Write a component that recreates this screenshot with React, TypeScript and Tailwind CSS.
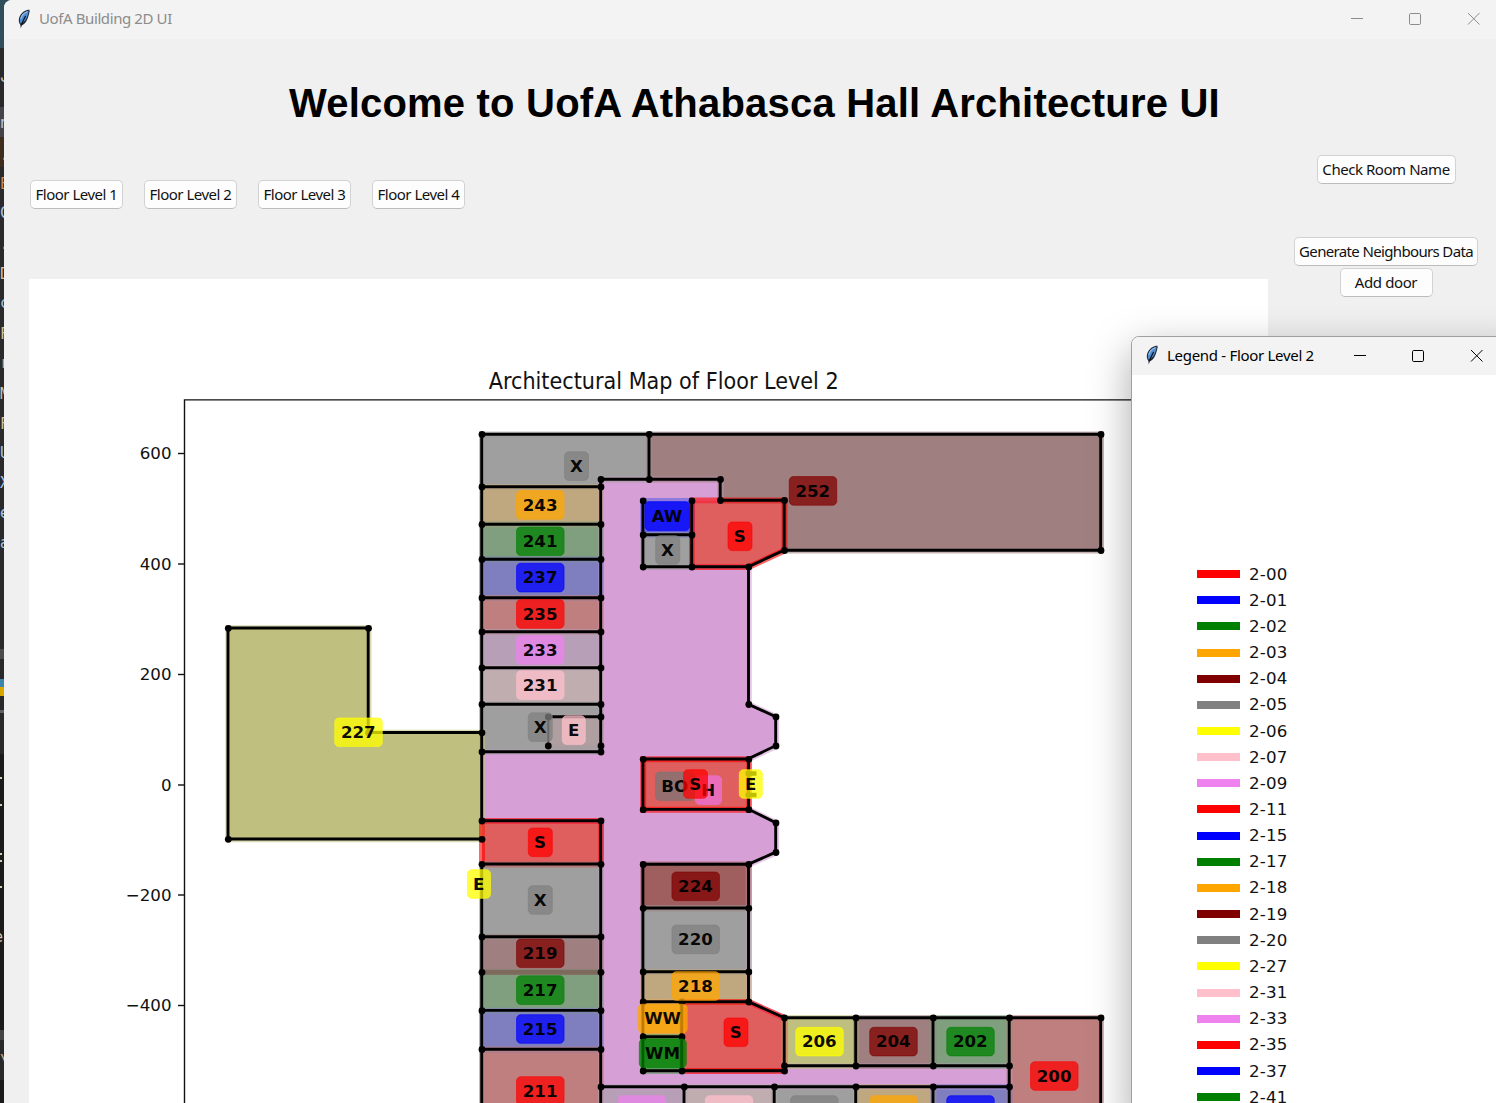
import React from "react";

const RED = "#ff0000";
const BLUE = "#0000ff";
const GREEN = "#008000";
const ORANGE = "#ffa500";
const MAROON = "#800000";
const GRAY = "#808080";
const YELLOW = "#ffff00";
const PINK = "#ffc0cb";
const VIOLET = "#ee82ee";

type Point = [number, number];
type Room = { fill: string; edge: string; points: Point[] };

const box = (x1: number, y1: number, x2: number, y2: number): Point[] => [
  [x1, y1],
  [x2, y1],
  [x2, y2],
  [x1, y2],
];

const rooms: Room[] = [
  {
    fill: "#d6a0d6",
    edge: VIOLET,
    points: [
      [601, 479.5], [720.5, 479.5], [720.5, 500.5], [692, 500.5], [692, 567], [748.8, 567],
      [748.8, 704.5], [776, 717], [776, 746], [748.8, 759], [748.8, 809.5], [776, 823],
      [776, 852.5], [748.8, 864.5], [748.8, 1002], [784.5, 1018], [784.5, 1066], [1009.5, 1066],
      [1009.5, 1087], [601, 1087], [601, 821], [482, 821], [482, 752], [601, 752],
    ],
  },
  {
    fill: "#9f9f9f",
    edge: GRAY,
    points: [[482, 434.5], [649.3, 434.5], [649.3, 479.5], [601, 479.5], [601, 487], [482, 487]],
  },
  {
    fill: "#9f7f7f",
    edge: MAROON,
    points: [
      [649.3, 434.5], [1101, 434.5], [1101, 550.5], [784.5, 550.5], [784.5, 500.5],
      [720.5, 500.5], [720.5, 479.5], [649.3, 479.5],
    ],
  },
  { fill: "#bfa77f", edge: ORANGE, points: box(482, 487, 601, 524.5) },
  { fill: "#7f9f7f", edge: GREEN, points: box(482, 524.5, 601, 559.5) },
  { fill: "#7f7fbf", edge: BLUE, points: box(482, 559.5, 601, 598) },
  { fill: "#bf7f7f", edge: RED, points: box(482, 598, 601, 632) },
  { fill: "#b89fb8", edge: VIOLET, points: box(482, 632, 601, 668) },
  { fill: "#bfadb0", edge: PINK, points: box(482, 668, 601, 704.5) },
  { fill: "#9f9f9f", edge: GRAY, points: box(482, 704.5, 601, 751.5) },
  { fill: "#af9fa1", edge: "#a89a9c", points: box(548.3, 717, 601, 746) },
  {
    fill: "#bfbf7f",
    edge: YELLOW,
    points: [[228.3, 628.3], [368.5, 628.3], [368.5, 732.8], [482, 732.8], [482, 839.3], [228.3, 839.3]],
  },
  { fill: "#df5f5f", edge: RED, points: box(482, 821, 601, 864.3) },
  { fill: "#9f9f9f", edge: GRAY, points: box(482, 864.3, 601, 937) },
  { fill: "#9f7f7f", edge: MAROON, points: box(482, 937, 601, 972.3) },
  { fill: "#7f9f7f", edge: GREEN, points: box(482, 972.3, 601, 1010.7) },
  { fill: "#7f7fbf", edge: BLUE, points: box(482, 1010.7, 601, 1049.5) },
  { fill: "#bf7f7f", edge: RED, points: box(482, 1049.5, 601, 1160) },
  { fill: "#5f5fdf", edge: BLUE, points: box(643.2, 501, 692, 535) },
  { fill: "#9f9f9f", edge: GRAY, points: box(643.2, 535, 692, 567) },
  {
    fill: "#df5f5f",
    edge: RED,
    points: [[692, 500.5], [784.5, 500.5], [784.5, 550.5], [748.8, 567], [692, 567]],
  },
  { fill: "#df5f5f", edge: RED, points: box(643.2, 759.3, 748.8, 809.7) },
  { fill: "#9f5f5f", edge: MAROON, points: box(643.2, 864.5, 748.8, 908.3) },
  { fill: "#9f9f9f", edge: GRAY, points: box(643.2, 908.3, 748.8, 972) },
  { fill: "#bfa77f", edge: ORANGE, points: box(643.2, 972, 748.8, 1002) },
  {
    fill: "#df5f5f",
    edge: RED,
    points: [[682, 1002], [748.8, 1002], [784.5, 1018], [784.5, 1071], [682, 1071]],
  },
  { fill: "#dfa75f", edge: ORANGE, points: box(643.2, 1002, 682, 1037) },
  { fill: "#5f9f5f", edge: GREEN, points: box(643.2, 1037, 682, 1071) },
  { fill: "#bfbf7f", edge: YELLOW, points: box(784.5, 1018, 856, 1066) },
  { fill: "#9f7f7f", edge: MAROON, points: box(856, 1018, 933.3, 1066) },
  { fill: "#7f9f7f", edge: GREEN, points: box(933.3, 1018, 1009.5, 1066) },
  { fill: "#bf7f7f", edge: RED, points: box(1009.5, 1018, 1101, 1160) },
  { fill: "#b89fb8", edge: VIOLET, points: box(601, 1087, 684.3, 1160) },
  { fill: "#bfadb0", edge: PINK, points: box(684.3, 1087, 774.5, 1160) },
  { fill: "#9f9f9f", edge: GRAY, points: box(774.5, 1087, 856, 1160) },
  { fill: "#bfa77f", edge: ORANGE, points: box(856, 1087, 933.3, 1160) },
  { fill: "#7f7fbf", edge: BLUE, points: box(933.3, 1087, 1009.5, 1160) },
];

const walls: Point[][] = [
  [[482, 821], [482, 434.5], [1101, 434.5], [1101, 550.5], [784.5, 550.5], [748.8, 567], [748.8, 704.5], [776, 717], [776, 746], [748.8, 759], [748.8, 809.5], [776, 823], [776, 852.5], [748.8, 864.5], [748.8, 1002], [784.5, 1018], [1101, 1018], [1101, 1160]],
  [[649.3, 434.5], [649.3, 479.5]],
  [[601, 752], [601, 479.5], [720.5, 479.5], [720.5, 500.5], [784.5, 500.5], [784.5, 550.5]],
  [[482, 487], [601, 487]],
  [[482, 524.5], [601, 524.5]],
  [[482, 559.5], [601, 559.5]],
  [[482, 598], [601, 598]],
  [[482, 632], [601, 632]],
  [[482, 668], [601, 668]],
  [[482, 704.5], [601, 704.5]],
  [[548.3, 717], [601, 717]],
  [[482, 752], [601, 752]],
  [[482, 732.8], [368.5, 732.8], [368.5, 628.3], [228.3, 628.3], [228.3, 839.3], [482, 839.3]],
  [[482, 821], [601, 821], [601, 1160]],
  [[482, 864.3], [601, 864.3]],
  [[482, 864.3], [482, 1160]],
  [[482, 937], [601, 937]],
  [[482, 1010.7], [601, 1010.7]],
  [[482, 1049.5], [601, 1049.5]],
  [[643.2, 501], [643.2, 567], [748.8, 567]],
  [[643.2, 535], [692, 535]],
  [[692, 500.5], [692, 567]],
  [[643.2, 759.3], [748.8, 759.3], [748.8, 809.7], [643.2, 809.7], [643.2, 759.3]],
  [[748.8, 864.5], [643.2, 864.5], [643.2, 1071], [784.5, 1071], [784.5, 1018]],
  [[643.2, 908.3], [748.8, 908.3]],
  [[643.2, 972], [748.8, 972]],
  [[643.2, 1002], [748.8, 1002]],
  [[643.2, 1037], [682, 1037]],
  [[682, 1002], [682, 1071]],
  [[784.5, 1066], [1009.5, 1066]],
  [[856, 1018], [856, 1066]],
  [[933.3, 1018], [933.3, 1066]],
  [[1009.5, 1018], [1009.5, 1160]],
  [[601, 1087], [1009.5, 1087]],
  [[684.3, 1087], [684.3, 1160]],
  [[774.5, 1087], [774.5, 1160]],
  [[856, 1087], [856, 1160]],
  [[933.3, 1087], [933.3, 1160]],
];

const dots: Point[] = [
  [482, 434.5], [649.3, 434.5], [1101, 434.5], [1101, 550.5], [784.5, 550.5], [784.5, 500.5],
  [720.5, 500.5], [720.5, 479.5], [649.3, 479.5], [601, 479.5], [748.8, 567], [748.8, 704.5],
  [776, 717], [776, 746], [748.8, 759.3], [748.8, 809.7], [776, 823], [776, 852.5],
  [748.8, 864.5], [748.8, 908.3], [748.8, 972], [748.8, 1002], [784.5, 1018], [784.5, 1066],
  [784.5, 1071], [856, 1018], [933.3, 1018], [1009.5, 1018], [1101, 1018], [856, 1066],
  [933.3, 1066], [1009.5, 1066], [601, 1087], [684.3, 1087], [774.5, 1087], [856, 1087],
  [933.3, 1087], [1009.5, 1087], [548.3, 717], [548.3, 746], [601, 717], [601, 746],
  [482, 732.8], [368.5, 628.3], [228.3, 628.3], [228.3, 839.3], [482, 839.3], [368.5, 732.8],
  [643.2, 501], [692, 501], [643.2, 535], [692, 535], [643.2, 567], [692, 567],
  [643.2, 759.3], [643.2, 809.7], [643.2, 864.5], [643.2, 908.3], [643.2, 972], [643.2, 1002],
  [643.2, 1037], [643.2, 1071], [682, 1002], [682, 1037], [682, 1071],
  ...[487, 524.5, 559.5, 598, 632, 668, 704.5, 752, 821, 864.3, 937, 972.3, 1010.7, 1049.5].flatMap(
    (y): Point[] => [[482, y], [601, y]],
  ),
];

type Label = { text: string; x: number; y: number; color: string; w?: number };

const labels: Label[] = [
  { text: "X", x: 576.5, y: 466.5, color: GRAY, w: 24 },
  { text: "252", x: 813, y: 491.3, color: MAROON },
  { text: "243", x: 540.3, y: 505.3, color: ORANGE },
  { text: "241", x: 540.3, y: 541.7, color: GREEN },
  { text: "237", x: 540.3, y: 578, color: BLUE },
  { text: "235", x: 540.3, y: 614.3, color: RED },
  { text: "233", x: 540.3, y: 650.3, color: VIOLET },
  { text: "231", x: 540.3, y: 685.5, color: PINK },
  { text: "X", x: 540.3, y: 727.5, color: GRAY, w: 24 },
  { text: "E", x: 573.8, y: 730.5, color: PINK, w: 23 },
  { text: "227", x: 358.5, y: 732.7, color: YELLOW },
  { text: "S", x: 540.3, y: 842.7, color: RED, w: 24 },
  { text: "E", x: 479, y: 884.4, color: YELLOW, w: 23 },
  { text: "X", x: 540.3, y: 900.4, color: GRAY, w: 24 },
  { text: "219", x: 540.3, y: 953.7, color: MAROON },
  { text: "217", x: 540.3, y: 990.5, color: GREEN },
  { text: "215", x: 540.3, y: 1029.4, color: BLUE },
  { text: "211", x: 540.3, y: 1091.4, color: RED },
  { text: "AW", x: 667.3, y: 516.5, color: BLUE, w: 44.5 },
  { text: "X", x: 667.7, y: 550.4, color: GRAY, w: 24 },
  { text: "S", x: 740, y: 536.7, color: RED, w: 24 },
  { text: "BO", x: 675, y: 786.7, color: "#7c7474", w: 39 },
  { text: "H", x: 708.5, y: 790.5, color: "#ee72d8", w: 26 },
  { text: "S", x: 695.5, y: 784.4, color: RED, w: 24 },
  { text: "E", x: 750.8, y: 784.4, color: YELLOW, w: 23 },
  { text: "224", x: 695.7, y: 886.7, color: MAROON },
  { text: "220", x: 695.7, y: 939.8, color: GRAY },
  { text: "218", x: 695.7, y: 986.4, color: ORANGE },
  { text: "S", x: 736, y: 1032.7, color: RED, w: 24 },
  { text: "WW", x: 662.7, y: 1018.9, color: ORANGE, w: 49 },
  { text: "WM", x: 662.8, y: 1053.7, color: GREEN, w: 47 },
  { text: "206", x: 819.5, y: 1042, color: YELLOW },
  { text: "204", x: 893.5, y: 1042, color: MAROON },
  { text: "202", x: 970.5, y: 1042, color: GREEN },
  { text: "200", x: 1054.3, y: 1076.4, color: RED },
  { text: "209", x: 642, y: 1110.4, color: VIOLET },
  { text: "207", x: 729, y: 1110.4, color: PINK },
  { text: "205", x: 814.3, y: 1110.4, color: GRAY },
  { text: "203", x: 893.5, y: 1110.4, color: ORANGE },
  { text: "201", x: 970.5, y: 1110.4, color: BLUE },
];

const ticks: [string, number][] = [
  ["600", 453.5],
  ["400", 564],
  ["200", 674.5],
  ["0", 785],
  ["−200", 895],
  ["−400", 1005.5],
];

const legend: [string, string][] = [
  ["2-00", RED],
  ["2-01", BLUE],
  ["2-02", GREEN],
  ["2-03", ORANGE],
  ["2-04", MAROON],
  ["2-05", GRAY],
  ["2-06", YELLOW],
  ["2-07", PINK],
  ["2-09", VIOLET],
  ["2-11", RED],
  ["2-15", BLUE],
  ["2-17", GREEN],
  ["2-18", ORANGE],
  ["2-19", MAROON],
  ["2-20", GRAY],
  ["2-27", YELLOW],
  ["2-31", PINK],
  ["2-33", VIOLET],
  ["2-35", RED],
  ["2-37", BLUE],
  ["2-41", GREEN],
];

const join = (points: Point[]) => points.map((p) => p.join(",")).join(" ");

function FloorMap() {
  return (
    <svg
      viewBox="29 279 1239 824"
      className="block h-[824px] w-[1239px] bg-white font-['DejaVu_Sans']"
    >
      <text
        transform="translate(663.7 389) scale(1 1.13)"
        fontSize="20"
        textAnchor="middle"
        textLength="350"
        lengthAdjust="spacingAndGlyphs"
        fill="#111"
      >
        Architectural Map of Floor Level 2
      </text>
      <path d="M184.5 1103V399.9H1268" fill="none" stroke="#111" strokeWidth="1.4" />
      {ticks.map(([text, y]) => (
        <g key={text}>
          <path d={`M178 ${y}H184.5`} stroke="#111" strokeWidth="1.4" />
          <text x="171.5" y={y + 5.8} fontSize="16.67" textAnchor="end" fill="#111">
            {text}
          </text>
        </g>
      ))}
      {rooms.map((r, i) => (
        <polygon key={i} points={join(r.points)} fill={r.fill} />
      ))}
      {rooms.map((r, i) => (
        <polygon
          key={i}
          points={join(r.points)}
          fill="none"
          stroke={r.fill === "#df5f5f" ? r.edge : r.fill}
          strokeWidth="6"
          strokeOpacity="0.6"
        />
      ))}
      <path d="M482 972.3H601" stroke="#7d6a5c" strokeWidth="5" />
      {walls.map((w, i) => (
        <polyline
          key={i}
          points={join(w)}
          transform="translate(-0.3 -0.3)"
          fill="none"
          stroke="#000"
          strokeWidth="2.9"
        />
      ))}
      {dots.map(([x, y], i) => (
        <circle key={i} cx={x} cy={y} r="3.4" />
      ))}
      <path d="M548.3 720V743" stroke="#2c2828" strokeWidth="2" />
      <path d="M745.5 773.5H756.5M745.5 795H756.5" stroke="#000" strokeWidth="4.5" />
      {labels.map((l, i) => {
        const w = l.w ?? 47.5;
        return (
          <g key={i}>
            <rect
              x={l.x - w / 2}
              y={l.y - 14.7}
              width={w}
              height="28.6"
              rx="4.2"
              fill={l.color}
              fillOpacity="0.75"
              stroke={l.color}
              strokeOpacity="0.6"
            />
            <text
              x={l.x - 0.2}
              y={l.y + 5.4}
              fontSize="16.67"
              fontWeight="700"
              textAnchor="middle"
              fill="#000"
              fillOpacity="0.95"
            >
              {l.text}
            </text>
          </g>
        );
      })}
    </svg>
  );
}

function Feather() {
  return (
    <svg viewBox="0 0 14 20" className="block h-5 w-3.5 shrink-0">
      <path
        d="M12.4 .8C8.6 .8 4.6 3.3 2.6 7.6C1.3 10.6 1.5 13.6 3.4 16L3.8 19.4L4.8 16.2C8 15.3 10.6 11 11.5 6.8C12.2 4.4 13 2.2 12.4 .8Z"
        fill="#1d2733"
      />
      <path
        d="M11.6 1.8C8 2.4 4.6 5 3.5 8.4C2.5 11 2.7 13 3.7 14.6C7 13.8 9.6 10.4 10.5 6.6C11 4.8 11.8 3 11.6 1.8Z"
        fill="#4f8cd2"
      />
      <path d="M10.4 2.8C7 4 4.6 6.6 3.6 10" stroke="#9fc0e6" strokeWidth="1.1" fill="none" />
      <path d="M8.6 7C7.4 9.4 5.6 12.4 4.2 16.4" stroke="#0a121c" strokeWidth="1.2" fill="none" />
    </svg>
  );
}

function Controls({ className }: { className: string }) {
  return (
    <svg viewBox="0 0 130 14" fill="none" className={className}>
      <path d="M1 6.5H13" stroke="currentColor" />
      <rect x="59.5" y="1.5" width="11" height="11" rx="1.2" stroke="currentColor" />
      <path d="M118 1L129.5 12.5M129.5 1L118 12.5" stroke="currentColor" />
    </svg>
  );
}

function Button({ children, className }: { children: string; className: string }) {
  return (
    <button
      className={`flex h-[29px] items-center justify-center rounded-[5px] border border-[#d2d2d2] border-b-[#bcbcbc] bg-[#fdfdfd] font-['Noto_Sans'] text-[15px] whitespace-nowrap text-[#111] ${className}`}
    >
      {children}
    </button>
  );
}

const code: [string, string, number][] = [
  ["ᴗ", "#c8c8c8", 64],
  ["n", "#a8cdf0", 110],
  [".", "#d8d8d8", 142],
  ["E", "#d08a58", 171],
  ["C", "#9ccaf0", 200],
  [".", "#d8d8d8", 231],
  ["D", "#d8c09a", 261],
  ["c", "#9ccaf0", 290],
  ["F", "#d8c09a", 321],
  ["r", "#d8a070", 350],
  ["M", "#d8c09a", 381],
  ["F", "#d8c09a", 411],
  ["U", "#9ccaf0", 440],
  ["X", "#9ccaf0", 470],
  ["e", "#9ccaf0", 500],
  ["a", "#9ccaf0", 530],
  ["\\", "#d0b080", 1048],
];

function EditorEdge() {
  return (
    <div className="relative flex w-1 shrink-0 flex-col overflow-hidden bg-[#1b1b1c] font-['DejaVu_Sans_Mono'] text-[15px] leading-[26px]">
      <div className="h-12 bg-[#304d5a]" />
      <div className="h-[59px] bg-[#29292b]" />
      <div className="h-[30px] bg-[#454549]" />
      <div className="h-[30px] bg-[#3f2e1b]" />
      <div className="h-[482px] bg-[#2a2a2c]" />
      <div className="h-[10px] bg-[#4b4b4e]" />
      <div className="h-[20px] bg-[#29292b]" />
      <div className="h-[8px] bg-[#3b85ad]" />
      <div className="h-[9px] bg-[#d8a800]" />
      <div className="h-[14px] bg-[#29292b]" />
      <div className="h-[3px] bg-[#606064]" />
      <div className="h-[41px] bg-[#29292b]" />
      <div className="h-[276px] bg-[#1b1b1c]" />
      <div className="h-[10px] bg-[#454547]" />
      <div className="h-[40px] bg-[#29292b]" />
      {code.map(([ch, color, y]) => (
        <span key={y} className="absolute left-0" style={{ top: y, color }}>
          {ch}
        </span>
      ))}
      {[777, 804, 853, 860, 886].map((y) => (
        <span key={y} className="absolute left-0 h-0.5 w-0.5 bg-[#d8ccb8]" style={{ top: y }} />
      ))}
      <span className="absolute top-[924px] left-0 text-[#d8ccb8]">
        <span className="-ml-1.5">e</span>
      </span>
    </div>
  );
}

export default function App() {
  return (
    <div className="relative flex h-[1103px] w-[1496px] overflow-hidden bg-[#304d5a] font-['Noto_Sans',sans-serif]">
      <EditorEdge />
      <main className="flex min-w-0 flex-1 flex-col overflow-hidden rounded-tl-lg bg-[#f0f0f0]">
        <header className="flex h-[39px] shrink-0 items-center bg-[#f3f3f3] pr-4 pl-[13px] text-[#8c8c8c]">
          <div className="pb-0.5">
            <Feather />
          </div>
          <span className="ml-2 pb-0.5 text-[15px] tracking-[-0.4px]">UofA Building 2D UI</span>
          <Controls className="mb-px ml-auto h-3.5 w-[130px]" />
        </header>
        <div className="flex h-[240px] shrink-0">
          <div className="flex w-[1264px] shrink-0 flex-col">
            <h1 className="pt-[38px] pl-[285px] font-['Liberation_Sans'] text-[40px] leading-[52px] font-bold tracking-[0.2px] whitespace-nowrap text-black">
              Welcome to UofA Athabasca Hall Architecture UI
            </h1>
            <nav className="mt-[51px] ml-[26px] flex gap-[21px]">
              {[1, 2, 3, 4].map((n) => (
                <Button key={n} className="w-[93px] tracking-[-0.5px]">{`Floor Level ${n}`}</Button>
              ))}
            </nav>
          </div>
        </div>
        <div className="flex">
          <div className="ml-[25px]">
            <FloorMap />
          </div>
        </div>
      </main>
      <aside className="absolute top-[155px] left-[1294px] flex w-[184px] flex-col items-center">
        <Button className="w-[139px] tracking-[-0.45px]">Check Room Name</Button>
        <Button className="mt-[53px] w-[184px] tracking-[-0.65px]">Generate Neighbours Data</Button>
        <Button className="mt-[2px] w-[93px] tracking-[-0.4px]">Add door</Button>
      </aside>
      <section className="absolute top-[336px] left-[1131px] flex h-[790px] w-[400px] flex-col overflow-hidden rounded-tl-lg border border-[#a0a0a0] bg-white shadow-[0_14px_42px_0_rgba(0,0,0,0.34)]">
        <header className="flex h-[38px] shrink-0 items-center bg-[#f3f3f3] pl-[13px] text-black">
          <div className="pb-0.5">
            <Feather />
          </div>
          <span className="ml-2 w-[178px] pb-0.5 text-[15px] tracking-[-0.3px] whitespace-nowrap">
            Legend - Floor Level 2
          </span>
          <Controls className="ml-2 h-3.5 w-[130px] shrink-0" />
        </header>
        <ul className="flex flex-col pt-[186px] pl-[65px] font-['DejaVu_Sans'] text-[16.67px] tracking-[0.2px] text-[#111]">
          {legend.map(([name, color]) => (
            <li key={name} className="flex h-[26.17px] items-center">
              <span className="h-2 w-[43px]" style={{ backgroundColor: color }} />
              <span className="ml-[9px]">{name}</span>
            </li>
          ))}
        </ul>
      </section>
    </div>
  );
}
